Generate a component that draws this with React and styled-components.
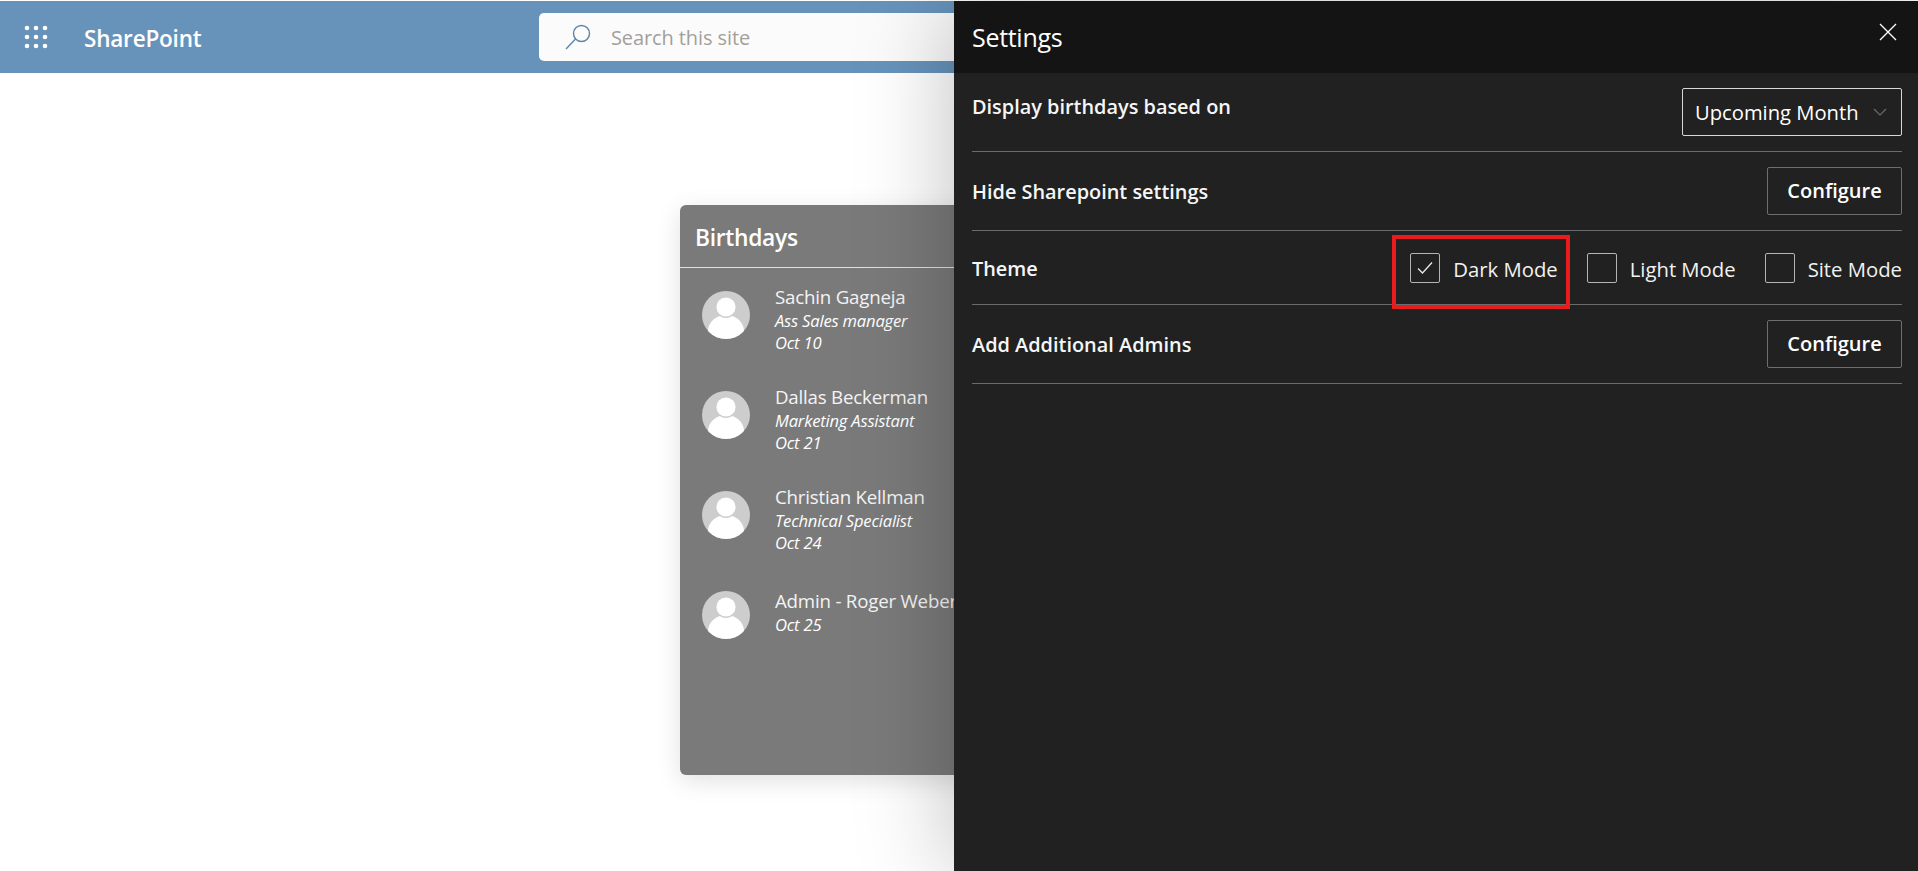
import React from "react";
import styled, { createGlobalStyle } from "styled-components";

const birthdays = [
  { name: "Sachin Gagneja", role: "Ass Sales manager", date: "Oct 10" },
  { name: "Dallas Beckerman", role: "Marketing Assistant", date: "Oct 21" },
  { name: "Christian Kellman", role: "Technical Specialist", date: "Oct 24" },
  { name: "Admin - Roger Weber", date: "Oct 25" },
];

const themes = [
  { label: "Dark Mode", checked: true },
  { label: "Light Mode" },
  { label: "Site Mode" },
];

function WaffleIcon() {
  const dots = [];
  for (let row = 0; row < 3; row++) {
    for (let col = 0; col < 3; col++) {
      dots.push(<circle key={`${row}-${col}`} cx={3 + col * 9} cy={3 + row * 9} r="2.3" fill="#fff" />);
    }
  }
  return (
    <svg width="24" height="24" viewBox="0 0 24 24">
      {dots}
    </svg>
  );
}

function SearchIcon() {
  return (
    <svg width="28" height="26" viewBox="0 0 28 26" fill="none" stroke="#5f84a8" strokeWidth="1.4">
      <circle cx="17.5" cy="9.5" r="8" />
      <path d="M11.5 15 L2 25" />
    </svg>
  );
}

function Avatar() {
  return (
    <svg width="48" height="48" viewBox="0 0 48 48">
      <defs>
        <clipPath id="avatarClip">
          <circle cx="24" cy="24" r="24" />
        </clipPath>
      </defs>
      <circle cx="24" cy="24" r="24" fill="#cdcdcd" />
      <g clipPath="url(#avatarClip)">
        <ellipse cx="24" cy="40" rx="18" ry="16" fill="#fff" />
        <circle cx="24" cy="15.5" r="11.4" fill="#cdcdcd" />
        <circle cx="24" cy="16" r="9.6" fill="#fff" />
      </g>
    </svg>
  );
}

export default function App() {
  return (
    <>
      <GlobalStyle />
      <Page>
        <TopBar>
          <Waffle>
            <WaffleIcon />
          </Waffle>
          <Brand>SharePoint</Brand>
          <SearchBox>
            <SearchIcon />
            <SearchText>Search this site</SearchText>
          </SearchBox>
        </TopBar>
        <Main>
          <Card>
            <CardTitle>Birthdays</CardTitle>
            <PersonList>
              {birthdays.map((person) => (
                <Person key={person.name}>
                  <Avatar />
                  <PersonInfo $short={!person.role}>
                    <PersonName>{person.name}</PersonName>
                    {person.role && <PersonMeta>{person.role}</PersonMeta>}
                    <PersonMeta>{person.date}</PersonMeta>
                  </PersonInfo>
                </Person>
              ))}
            </PersonList>
          </Card>
        </Main>
        <Panel>
          <PanelHeader>
            <PanelTitle>Settings</PanelTitle>
            <CloseButton aria-label="Close">
              <svg width="18" height="18" viewBox="0 0 18 18" stroke="#fff" strokeWidth="1.3">
                <path d="M1 1 L17 17 M17 1 L1 17" />
              </svg>
            </CloseButton>
          </PanelHeader>
          <PanelBody>
            <Row>
              <RowLabel $top>Display birthdays based on</RowLabel>
              <Select>
                <span>Upcoming Month</span>
                <svg width="14" height="8" viewBox="0 0 14 8" fill="none" stroke="#6a6a6a" strokeWidth="1.2">
                  <path d="M1 1 L7 7 L13 1" />
                </svg>
              </Select>
            </Row>
            <Row>
              <RowLabel>Hide Sharepoint settings</RowLabel>
              <ConfigureButton>Configure</ConfigureButton>
            </Row>
            <ThemeRow>
              <ThemeTitle>Theme</ThemeTitle>
              <ThemeOptions>
                {themes.map((theme) => (
                  <ThemeOption key={theme.label}>
                    <Checkbox>
                      {theme.checked && (
                        <svg width="16" height="14" viewBox="0 0 16 14" fill="none" stroke="#e8e8e8" strokeWidth="1.3">
                          <path d="M1 7.5 L5.5 12 L15 1.5" />
                        </svg>
                      )}
                    </Checkbox>
                    <ThemeLabel>{theme.label}</ThemeLabel>
                    {theme.checked && <Highlight />}
                  </ThemeOption>
                ))}
              </ThemeOptions>
            </ThemeRow>
            <Row>
              <RowLabel>Add Additional Admins</RowLabel>
              <ConfigureButton>Configure</ConfigureButton>
            </Row>
          </PanelBody>
        </Panel>
      </Page>
    </>
  );
}

const GlobalStyle = createGlobalStyle`
  html, body {
    margin: 0;
    padding: 0;
    background: #fff;
  }
  body {
    font-family: "Open Sans", "Noto Sans", "Liberation Sans", sans-serif;
  }
`;
const Page = styled.div`
  position: relative;
  height: 871px;
  padding-top: 1px;
  box-sizing: border-box;
  overflow: hidden;
  background: #fff;
`;
const TopBar = styled.header`
  height: 72px;
  display: flex;
  align-items: center;
  background: #6793bb;
`;
const Waffle = styled.div`
  width: 24px;
  height: 24px;
  margin-left: 24px;
`;
const Brand = styled.div`
  margin-left: 36px;
  width: 455px;
  padding-top: 2px;
  color: #fff;
  font-size: 22.5px;
  font-weight: 600;
  letter-spacing: -0.2px;
`;
const SearchBox = styled.div`
  width: 500px;
  height: 48px;
  display: flex;
  align-items: center;
  gap: 19px;
  padding-left: 25px;
  box-sizing: border-box;
  background: #fbfbfb;
  border-radius: 5px;
`;
const SearchText = styled.span`
  color: #a39f9b;
  font-size: 20px;
  letter-spacing: -0.1px;
`;
const Main = styled.main`
  padding: 132px 0 0 680px;
`;
const Card = styled.section`
  width: 420px;
  height: 570px;
  border-radius: 6px;
  background: #7a7a7a;
  color: #f4f4f4;
  box-shadow: 0 6px 24px rgba(0, 0, 0, 0.12);
`;
const CardTitle = styled.h2`
  height: 63px;
  margin: 0;
  padding: 2px 0 0 15px;
  display: flex;
  align-items: center;
  box-sizing: border-box;
  border-bottom: 1px solid #e0e0e0;
  font-size: 22.8px;
  font-weight: 600;
  letter-spacing: -0.3px;
  color: #fff;
`;
const PersonList = styled.div`
  display: flex;
  flex-direction: column;
  padding: 23px 0 0 22px;
`;
const Person = styled.div`
  height: 100px;
  display: flex;
  gap: 25px;
`;
const PersonInfo = styled.div`
  display: flex;
  flex-direction: column;
  margin-top: ${(props) => (props.$short ? "-4px" : "-8px")};
`;
const PersonName = styled.div`
  font-size: 18.7px;
  line-height: 27px;
  letter-spacing: -0.2px;
  white-space: nowrap;
`;
const PersonMeta = styled.div`
  font-size: 16.6px;
  line-height: 22px;
  font-style: italic;
  letter-spacing: -0.2px;
  color: #fff;
  white-space: nowrap;
`;
const Panel = styled.aside`
  position: absolute;
  top: 1px;
  right: 0;
  bottom: 0;
  width: 964px;
  display: flex;
  flex-direction: column;
  background: #212121;
  color: #fff;
  box-shadow: 0 0 90px rgba(0, 0, 0, 0.26);
`;
const PanelHeader = styled.div`
  height: 72px;
  flex-shrink: 0;
  display: flex;
  align-items: center;
  justify-content: space-between;
  padding: 0 21px 0 18px;
  background: #141414;
`;
const PanelTitle = styled.h1`
  margin: 0;
  font-size: 25px;
  font-weight: 400;
  letter-spacing: -0.3px;
`;
const CloseButton = styled.button`
  display: flex;
  padding: 0;
  margin-top: -10px;
  border: none;
  background: none;
`;
const PanelBody = styled.div`
  display: flex;
  flex-direction: column;
  padding: 0 16px 0 18px;
`;
const Row = styled.div`
  display: flex;
  align-items: center;
  justify-content: space-between;
  padding: 15px 0 15px;
  border-bottom: 1px solid #6b6b6b;
`;
const ThemeRow = styled(Row)`
  height: 73px;
  box-sizing: content-box;
  padding: 0;
`;
const RowLabel = styled.div`
  font-size: 19.9px;
  font-weight: 600;
  color: #f6f6f6;
  margin-top: ${(props) => (props.$top ? "-12px" : "0")};
`;
const ThemeTitle = styled(RowLabel)`
  padding-top: 2px;
`;
const Select = styled.div`
  width: 220px;
  height: 48px;
  display: flex;
  align-items: center;
  justify-content: space-between;
  padding: 0 14px 0 12px;
  box-sizing: border-box;
  border: 1px solid #d8d8d8;
  border-radius: 2px;
  font-size: 20.2px;
`;
const ConfigureButton = styled.button`
  width: 135px;
  height: 48px;
  padding: 0 0 2px;
  border: 1px solid #6e6e6e;
  border-radius: 2px;
  background: transparent;
  color: #fff;
  font-family: inherit;
  font-size: 20px;
  font-weight: 600;
`;
const ThemeOptions = styled.div`
  display: flex;
  gap: 29px;
`;
const ThemeOption = styled.label`
  position: relative;
  display: flex;
  align-items: center;
  gap: 13px;
`;
const Checkbox = styled.span`
  width: 30px;
  height: 30px;
  display: flex;
  align-items: center;
  justify-content: center;
  box-sizing: border-box;
  border: 1px solid #b5b5b5;
  border-radius: 2px;
`;
const ThemeLabel = styled.span`
  padding-top: 3px;
  font-size: 20.3px;
  color: #f2f2f2;
`;
const Highlight = styled.span`
  position: absolute;
  top: -17px;
  bottom: -26px;
  left: -18px;
  right: -12px;
  border: 4px solid #e81c1c;
`;
